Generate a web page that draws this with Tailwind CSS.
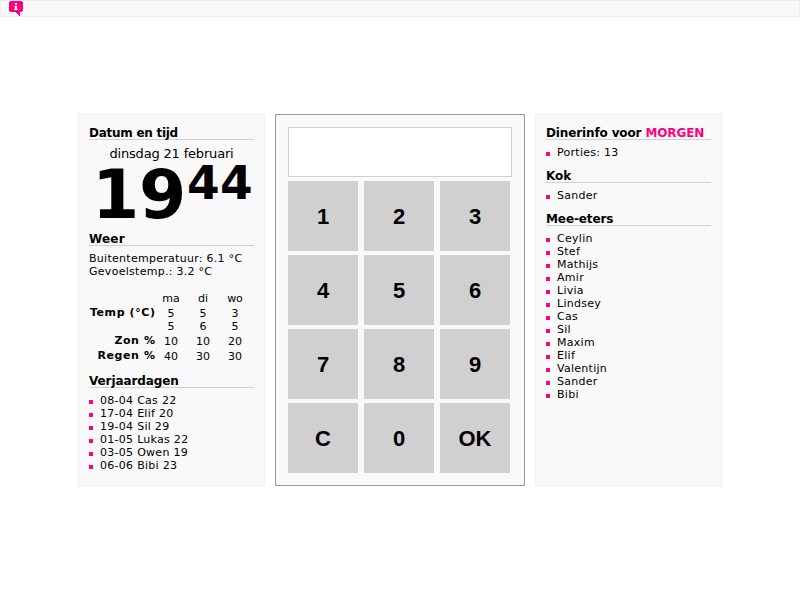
<!DOCTYPE html>
<html lang="nl">
<head>
<meta charset="utf-8">
<title>Dinerlijst</title>
<script src="https://cdn.jsdelivr.net/npm/@tailwindcss/browser@4"></script>
</head>
<body class="bg-white text-black font-['DejaVu_Sans',Verdana,sans-serif] text-[11px] leading-[13px] tracking-[0.28px] h-[600px] overflow-hidden">
<header class="h-[17px] border border-[#eeeeee] bg-[#f9f9f9] pl-2">
<svg class="block" width="14" height="15" viewBox="0 0 14 15" shape-rendering="crispEdges">
<path fill="#ff0080" d="M1 0h12v1h1v9h-1v1h-2v4h-1v-1h-1v-1h-1v-1h-1v-1H1v-1H0V1h1z"/>
<path fill="#fff" d="M6 2h2v2H6zM5 5h3v3h1v1H5V8h1V6H5z"/>
</svg>
</header>
<main class="mt-[97px] ml-[78px] flex gap-[10px] h-[372px]">
<section class="w-[187px] border border-[#eeeeee] bg-[#f9f9f9] p-[10px]">
<h3 class="h-[15px] border-b border-[#d0d0d0] font-bold text-[12px] leading-[16px] tracking-[-0.27px]">Datum en tijd</h3>
<p class="mt-[6px] h-[15px] text-center text-[13px] leading-[15px] tracking-[-0.18px] whitespace-nowrap">dinsdag 21 februari</p>
<div class="h-[70px] flex items-start font-bold whitespace-nowrap pl-[3px]">
<span class="text-[68px] leading-[68px] tracking-[-0.2px]">19</span><span class="text-[47px] leading-[47px] tracking-[0.5px] mt-[-2px] ml-[0.7px]">44</span>
</div>
<h3 class="h-[15px] border-b border-[#d0d0d0] font-bold text-[12px] leading-[16px] tracking-[0.2px]">Weer</h3>
<p class="mt-[6px]">Buitentemperatuur: 6.1 °C<br>Gevoelstemp.: 3.2 °C</p>
<div class="mt-[14px] h-[72px] grid grid-cols-[66px_32px_32px_32px] grid-rows-[14px_28px_15px_15px] text-center tracking-normal whitespace-nowrap">
<span></span><span>ma</span><span>di</span><span>wo</span>
<b class="text-right tracking-[0.6px] -mr-[0.6px]">Temp (°C)</b><span class="pt-px">5<br>5</span><span class="pt-px">5<br>6</span><span class="pt-px">3<br>5</span>
<b class="text-right tracking-[0.6px] -mr-[0.6px]">Zon %</b><span class="pt-px">10</span><span class="pt-px">10</span><span class="pt-px">20</span>
<b class="text-right tracking-[0.6px] -mr-[0.6px]">Regen %</b><span class="pt-px">40</span><span class="pt-px">30</span><span class="pt-px">30</span>
</div>
<h3 class="mt-[9px] h-[15px] border-b border-[#d0d0d0] font-bold text-[12px] leading-[16px] tracking-[-0.1px]">Verjaardagen</h3>
<ul class="mt-[6px] *:bg-[linear-gradient(#ff0080,#ff0080)] *:bg-no-repeat *:bg-size-[4px_4px] *:bg-position-[0_6px] *:pl-[11px]">
<li>08-04 Cas 22</li><li>17-04 Elif 20</li><li>19-04 Sil 29</li><li>01-05 Lukas 22</li><li>03-05 Owen 19</li><li>06-06 Bibi 23</li>
</ul>
</section>
<section class="w-[250px] border border-[#999999] bg-[#f9f9f9] p-[12px]">
<div class="w-[224px] h-[50px] border border-[#d0d0d0] bg-white"></div>
<div class="mt-[4px] grid grid-cols-[70px_70px_70px] grid-rows-[70px_70px_70px_70px] gap-x-[6px] gap-y-[4px] font-['Liberation_Sans',Arial,sans-serif] font-bold text-[22px] leading-[68px] tracking-normal text-center *:bg-[#d0d0d0] *:pt-[2px]">
<button>1</button><button>2</button><button>3</button>
<button>4</button><button>5</button><button>6</button>
<button>7</button><button>8</button><button>9</button>
<button>C</button><button>0</button><button>OK</button>
</div>
</section>
<section class="w-[187px] border border-[#eeeeee] bg-[#f9f9f9] p-[10px]">
<h3 class="h-[15px] border-b border-[#d0d0d0] font-bold text-[12px] leading-[16px] tracking-[-0.13px] whitespace-nowrap">Dinerinfo voor <span class="text-[#ff0080]">MORGEN</span></h3>
<ul class="mt-[6px] mb-[9px] *:bg-[linear-gradient(#ff0080,#ff0080)] *:bg-no-repeat *:bg-size-[4px_4px] *:bg-position-[0_6px] *:pl-[11px]"><li>Porties: 13</li></ul>
<h3 class="h-[15px] border-b border-[#d0d0d0] font-bold text-[12px] leading-[16px] tracking-[-0.1px]">Kok</h3>
<ul class="mt-[6px] mb-[9px] *:bg-[linear-gradient(#ff0080,#ff0080)] *:bg-no-repeat *:bg-size-[4px_4px] *:bg-position-[0_6px] *:pl-[11px]"><li>Sander</li></ul>
<h3 class="h-[15px] border-b border-[#d0d0d0] font-bold text-[12px] leading-[16px] tracking-[-0.1px]">Mee-eters</h3>
<ul class="mt-[6px] *:bg-[linear-gradient(#ff0080,#ff0080)] *:bg-no-repeat *:bg-size-[4px_4px] *:bg-position-[0_6px] *:pl-[11px]">
<li>Ceylin</li><li>Stef</li><li>Mathijs</li><li>Amir</li><li>Livia</li><li>Lindsey</li><li>Cas</li><li>Sil</li><li>Maxim</li><li>Elif</li><li>Valentijn</li><li>Sander</li><li>Bibi</li>
</ul>
</section>
</main>
</body>
</html>
